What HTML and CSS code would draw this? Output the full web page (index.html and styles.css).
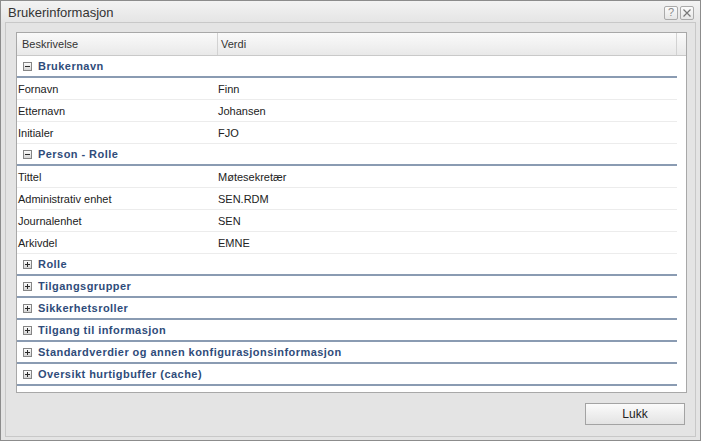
FILE: index.html
```html
<!DOCTYPE html>
<html>
<head>
<meta charset="utf-8">
<link rel="stylesheet" href="styles.css">
</head>
<body>
<div class="window">
  <div class="titlebar">
    <span class="title">Brukerinformasjon</span>
    <div class="tools">
      <span class="tool">?</span>
      <span class="tool"><svg width="10" height="10" viewBox="0 0 10 10"><path d="M1.5 1.5 L8.5 8.5 M8.5 1.5 L1.5 8.5" stroke="#777" stroke-width="1.2" fill="none"/></svg></span>
    </div>
  </div>
  <div class="frame">
    <div class="grid">
      <div class="ghead">
        <div class="hcell c1">Beskrivelse</div>
        <div class="hcell c2">Verdi</div>
        <div class="hfill"></div>
      </div>
      <div class="gbody">
        <div class="group"><svg class="tg" width="9" height="9" viewBox="0 0 9 9"><defs><linearGradient id="g1" x1="0" y1="0" x2="0" y2="1"><stop offset="0" stop-color="#ffffff"/><stop offset="1" stop-color="#d2d2d2"/></linearGradient></defs><rect x="0.5" y="0.5" width="8" height="8" fill="url(#g1)" stroke="#858585"/><path d="M2 4.5 H7" stroke="#2a2a2a" stroke-width="1"/></svg><span>Brukernavn</span></div>
        <div class="row"><div class="cell c1">Fornavn</div><div class="cell c2">Finn</div></div>
        <div class="row"><div class="cell c1">Etternavn</div><div class="cell c2">Johansen</div></div>
        <div class="row"><div class="cell c1">Initialer</div><div class="cell c2">FJO</div></div>
        <div class="group"><svg class="tg" width="9" height="9" viewBox="0 0 9 9"><rect x="0.5" y="0.5" width="8" height="8" fill="url(#g1)" stroke="#858585"/><path d="M2 4.5 H7" stroke="#2a2a2a" stroke-width="1"/></svg><span>Person - Rolle</span></div>
        <div class="row"><div class="cell c1">Tittel</div><div class="cell c2">Møtesekretær</div></div>
        <div class="row"><div class="cell c1">Administrativ enhet</div><div class="cell c2">SEN.RDM</div></div>
        <div class="row"><div class="cell c1">Journalenhet</div><div class="cell c2">SEN</div></div>
        <div class="row"><div class="cell c1">Arkivdel</div><div class="cell c2">EMNE</div></div>
        <div class="group"><svg class="tg" width="9" height="9" viewBox="0 0 9 9"><rect x="0.5" y="0.5" width="8" height="8" fill="url(#g1)" stroke="#858585"/><path d="M2 4.5 H7 M4.5 2 V7" stroke="#2a2a2a" stroke-width="1"/></svg><span>Rolle</span></div>
        <div class="group"><svg class="tg" width="9" height="9" viewBox="0 0 9 9"><rect x="0.5" y="0.5" width="8" height="8" fill="url(#g1)" stroke="#858585"/><path d="M2 4.5 H7 M4.5 2 V7" stroke="#2a2a2a" stroke-width="1"/></svg><span>Tilgangsgrupper</span></div>
        <div class="group"><svg class="tg" width="9" height="9" viewBox="0 0 9 9"><rect x="0.5" y="0.5" width="8" height="8" fill="url(#g1)" stroke="#858585"/><path d="M2 4.5 H7 M4.5 2 V7" stroke="#2a2a2a" stroke-width="1"/></svg><span>Sikkerhetsroller</span></div>
        <div class="group"><svg class="tg" width="9" height="9" viewBox="0 0 9 9"><rect x="0.5" y="0.5" width="8" height="8" fill="url(#g1)" stroke="#858585"/><path d="M2 4.5 H7 M4.5 2 V7" stroke="#2a2a2a" stroke-width="1"/></svg><span>Tilgang til informasjon</span></div>
        <div class="group"><svg class="tg" width="9" height="9" viewBox="0 0 9 9"><rect x="0.5" y="0.5" width="8" height="8" fill="url(#g1)" stroke="#858585"/><path d="M2 4.5 H7 M4.5 2 V7" stroke="#2a2a2a" stroke-width="1"/></svg><span>Standardverdier og annen konfigurasjonsinformasjon</span></div>
        <div class="group"><svg class="tg" width="9" height="9" viewBox="0 0 9 9"><rect x="0.5" y="0.5" width="8" height="8" fill="url(#g1)" stroke="#858585"/><path d="M2 4.5 H7 M4.5 2 V7" stroke="#2a2a2a" stroke-width="1"/></svg><span>Oversikt hurtigbuffer (cache)</span></div>
      </div>
    </div>
    <div class="footer">
      <button class="btn">Lukk</button>
    </div>
  </div>
</div>
</body>
</html>
```

FILE: styles.css
```css
* { box-sizing: border-box; }
html, body { margin: 0; padding: 0; background: #e4e4e4; }
body { font-family: "Liberation Sans", Arial, sans-serif; }

.window {
  width: 701px;
  height: 441px;
  border: 1px solid #8c8c8c;
  background: #e4e4e4;
  display: flex;
  flex-direction: column;
}

.titlebar {
  height: 21px;
  flex: none;
  display: flex;
  align-items: center;
  justify-content: space-between;
  padding: 0 6px 0 7px;
  background: linear-gradient(#f3f3f3, #e5e5e5);
}
.title {
  font-size: 13px;
  color: #333;
  padding-top: 1px;
}
.tools { display: flex; gap: 2px; padding-top: 2px; }
.tool {
  width: 14px;
  height: 14px;
  border: 1px solid #aaa;
  border-radius: 2px;
  background: linear-gradient(#fbfbfb, #e6e6e6);
  display: flex;
  align-items: center;
  justify-content: center;
  font-size: 11px;
  color: #888;
  line-height: 1;
}

.frame {
  flex: 1;
  margin: 0 4px 3px 4px;
  border: 1px solid #c8c8c8;
  padding: 9px 8px 0 10px;
  display: flex;
  flex-direction: column;
}

.grid {
  height: 361px;
  flex: none;
  border: 1px solid #a8a8a8;
  background: #fff;
  display: flex;
  flex-direction: column;
}

.ghead {
  height: 23px;
  flex: none;
  display: flex;
  border-bottom: 1px solid #c9c9c9;
  background: linear-gradient(#fafafa, #e9e9e9);
  font-size: 11px;
  color: #333;
}
.hcell {
  display: flex;
  align-items: center;
  border-right: 1px solid #d2d2d2;
}
.hcell.c1 { width: 201px; padding-left: 5px; }
.hcell.c2 { width: 459px; padding-left: 3px; }
.hfill { flex: 1; }

.gbody { width: 660px; }

.group {
  height: 22px;
  display: flex;
  align-items: center;
  padding-left: 6px;
  border-bottom: 2px solid #8a9bb2;
  font-size: 11px;
  font-weight: bold;
  letter-spacing: 0.45px;
  color: #2f4c7a;
}
.group .tg { margin-right: 6px; flex: none; }

.row {
  height: 22px;
  display: flex;
  border-bottom: 1px solid #ececec;
  font-size: 11px;
  color: #222;
}
.cell {
  display: flex;
  align-items: center;
}
.cell.c1 { width: 200px; padding-left: 1px; }
.cell.c2 { flex: 1; padding-left: 1px; }

.footer {
  display: flex;
  justify-content: flex-end;
  padding-top: 10px;
  padding-right: 2px;
}
.btn {
  width: 100px;
  height: 22px;
  border: 1px solid #a3a3a3;
  border-radius: 0;
  background: linear-gradient(#fbfbfb, #e3e3e3);
  font-family: "Liberation Sans", Arial, sans-serif;
  font-size: 12px;
  color: #222;
  padding: 0;
}
```
